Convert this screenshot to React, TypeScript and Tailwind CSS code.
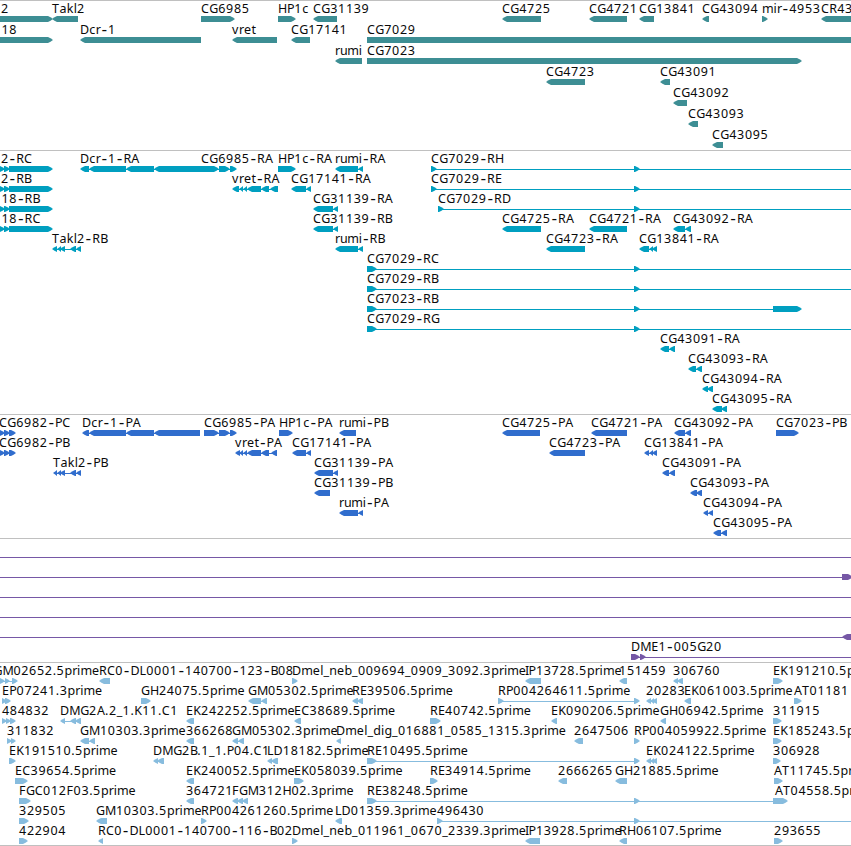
type Part = [start: number, end: number];

interface Feature {
  label?: string;
  strand: '+' | '-';
  parts: Part[];
  /** Left edge of the label, when the feature starts outside the view. */
  labelX?: number;
  /** Right end of the connecting line, when it runs past the last part. */
  lineTo?: number;
  lineFrom?: number;
}

interface Track {
  id: string;
  color: string;
  height: string;
  rowHeight: string;
  rows: Feature[][];
}

const VIEW_WIDTH = 851;
const HEAD = 5;

// Glyph advances for labels, in px
const ADVANCE: Record<string, number> = {
  A: 8.1, B: 7.4, C: 8.3, D: 9.2, E: 7.2, F: 6.9, G: 8.9, H: 9, I: 3.6, K: 7.9, L: 6.6,
  M: 11, P: 7.3, R: 7.9, T: 7.4, a: 7.3, b: 7.7, c: 6.6, d: 7.7, e: 7.5, g: 7.7, i: 3.4,
  k: 7, l: 3.3, m: 11.5, n: 7.6, p: 7.8, r: 4.9, t: 4.8, u: 7.4, v: 7, '-': 7.4, '_': 5.8, '.': 3.9,
};

function fwd(label: string, parts: Part[], extra: Partial<Feature> = {}): Feature {
  return { label, strand: '+', parts, ...extra };
}

function rev(label: string, parts: Part[], extra: Partial<Feature> = {}): Feature {
  return { label, strand: '-', parts, ...extra };
}

const MID: Part = [634, 640];
const OPEN = { lineTo: VIEW_WIDTH };
const LINE: Feature = { strand: '+', parts: [], lineFrom: 0, lineTo: VIEW_WIDTH };
const EDGE_RNA: Part[] = [[-1, 5], [4, 10], [9, 53]];
const EDGE_CDS: Part[] = [[-1, 5], [4, 10], [9, 16]];

const genes: Feature[][] = [
  [
    fwd('2', [[-9, 53]], { labelX: 1 }),
    rev('Takl2', [[52, 78]]),
    fwd('CG6985', [[201, 235]]),
    fwd('HP1c', [[278, 296]]),
    rev('CG31139', [[313, 337]]),
    rev('CG4725', [[502, 541]]),
    rev('CG4721', [[589, 627]]),
    rev('CG13841', [[639, 654]]),
    rev('CG43094', [[702, 709]]),
    fwd('mir-4953', [[762, 768]]),
    rev('CR43', [[821, 870]]),
  ],
  [
    fwd('18', [[-9, 53]], { labelX: 1.5 }),
    rev('Dcr-1', [[80, 201]]),
    rev('vret', [[232, 277]]),
    rev('CG17141', [[291, 310]]),
    fwd('CG7029', [[367, 870]]),
  ],
  [rev('rumi', [[335, 362]]), fwd('CG7023', [[367, 802]])],
  [rev('CG4723', [[546, 585]]), rev('CG43091', [[660, 670]])],
  [rev('CG43092', [[673, 687]])],
  [rev('CG43093', [[688, 698]])],
  [rev('CG43095', [[712, 723]])],
];

const transcripts: Feature[][] = [
  [
    fwd('2-RC', EDGE_RNA, { labelX: 1 }),
    rev('Dcr-1-RA', [[80, 89], [89, 126], [126, 154], [154, 201]]),
    fwd('CG6985-RA', [[201, 219], [219, 230], [230, 237]]),
    fwd('HP1c-RA', [[278, 296]]),
    rev('rumi-RA', [[335, 358], [358, 363]]),
    fwd('CG7029-RH', [[431, 437], MID], OPEN),
  ],
  [
    fwd('2-RB', EDGE_RNA, { labelX: 1 }),
    rev('vret-RA', [[232, 239], [239, 243], [243, 247], [247, 261], [261, 269], [270, 278]]),
    rev('CG17141-RA', [[291, 306], [306, 311]]),
    fwd('CG7029-RE', [[431, 437], MID], OPEN),
  ],
  [
    fwd('18-RB', EDGE_RNA, { labelX: 1.5 }),
    rev('CG31139-RA', [[313, 333], [333, 338]]),
    fwd('CG7029-RD', [[438, 444], MID], OPEN),
  ],
  [
    fwd('18-RC', EDGE_RNA, { labelX: 1.5 }),
    rev('CG31139-RB', [[313, 333], [333, 338]]),
    rev('CG4725-RA', [[502, 541]]),
    rev('CG4721-RA', [[589, 627]]),
    rev('CG43092-RA', [[673, 685], [685, 691]]),
  ],
  [
    rev('Takl2-RB', [[52, 57], [57, 61], [60, 65], [70, 76], [76, 81]]),
    rev('rumi-RB', [[335, 358], [358, 363]]),
    rev('CG4723-RA', [[546, 585]]),
    rev('CG13841-RA', [[639, 649], [649, 653], [652, 657]]),
  ],
  [fwd('CG7029-RC', [[367, 377], MID], OPEN)],
  [fwd('CG7029-RB', [[367, 377], MID], OPEN)],
  [fwd('CG7023-RB', [[367, 377], MID, [773, 802]])],
  [fwd('CG7029-RG', [[367, 377], MID], OPEN)],
  [rev('CG43091-RA', [[660, 669], [669, 675]])],
  [rev('CG43093-RA', [[688, 696], [696, 702]])],
  [rev('CG43094-RA', [[702, 708], [707, 713]])],
  [rev('CG43095-RA', [[712, 722], [721, 727]])],
];

const proteins: Feature[][] = [
  [
    fwd('CG6982-PC', EDGE_CDS, { labelX: -1 }),
    rev('Dcr-1-PA', [[82, 89], [89, 126], [126, 154], [154, 200]]),
    fwd('CG6985-PA', [[204, 219], [219, 230], [230, 237]]),
    fwd('HP1c-PA', [[279, 293]]),
    rev('rumi-PB', [[339, 356]]),
    rev('CG4725-PA', [[502, 540]]),
    rev('CG4721-PA', [[591, 627]]),
    rev('CG43092-PA', [[674, 685], [685, 691]]),
    fwd('CG7023-PB', [[776, 799]]),
  ],
  [
    fwd('CG6982-PB', EDGE_CDS, { labelX: -1 }),
    rev('vret-PA', [[235, 240], [239, 243], [243, 247], [247, 261], [261, 269], [271, 277]]),
    rev('CG17141-PA', [[292, 306], [306, 311]]),
    rev('CG4723-PA', [[549, 585]]),
    rev('CG13841-PA', [[644, 649], [649, 653], [652, 657]]),
  ],
  [
    rev('Takl2-PB', [[53, 57], [57, 61], [60, 65], [70, 76], [76, 81]]),
    rev('CG31139-PA', [[314, 333], [333, 338]]),
    rev('CG43091-PA', [[662, 669], [669, 675]]),
  ],
  [rev('CG31139-PB', [[314, 330]]), rev('CG43093-PA', [[690, 697], [696, 702]])],
  [rev('rumi-PA', [[339, 358], [358, 363]]), rev('CG43094-PA', [[703, 708], [708, 713]])],
  [rev('CG43095-PA', [[713, 721], [721, 727]])],
];

const bacEnds: Feature[][] = [
  [LINE],
  [{ strand: '+', parts: [[842, 853]], lineFrom: 0 }],
  [LINE],
  [LINE],
  [{ strand: '-', parts: [[842, 858]], lineFrom: 0 }],
  [fwd('DME1-005G20', [[631, 640], [640, 646]], OPEN)],
];

const ests: Feature[][] = [
  [
    fwd('GM02652.5prime', [[-1, 5], [5, 10], [12, 18]], { labelX: -6.5 }),
    rev('RC0-DL0001-140700-123-B08', [[99, 110]]),
    fwd('Dmel_neb_009694_0909_3092.3prime', [[292, 298]]),
    rev('IP13728.5prime', [[525, 541]]),
    rev('151459', [[619, 627]]),
    rev('306760', [[673, 678], [677, 683]]),
    fwd('EK191210.5prime', [[773, 783]]),
  ],
  [
    fwd('EP07241.3prime', [[2, 7], [5, 11]]),
    fwd('GH24075.5prime', [[141, 151]]),
    rev('GM05302.5prime', [[248, 261], [261, 267]]),
    rev('RE39506.5prime', [[352, 358], [357, 363]]),
    fwd('RP004264611.5prime', [[498, 504], MID]),
    rev('20283', [[646, 651], [650, 654], [652, 657]]),
    rev('EK061003.5prime', [[684, 691]]),
    fwd('AT01181', [[794, 802]]),
  ],
  [
    fwd('484832', [[2, 7], [6, 11], [10, 16]]),
    rev('DMG2A.2_1.K11.C1', [[60, 65], [70, 76], [75, 81]]),
    rev('EK242252.5prime', [[186, 194]]),
    rev('EC38689.5prime', [[294, 301]]),
    fwd('RE40742.5prime', [[430, 441]]),
    rev('EK090206.5prime', [[551, 557]]),
    rev('GH06942.5prime', [[660, 666]]),
    fwd('311915', [[773, 782]]),
  ],
  [
    fwd('311832', [[7, 12], [11, 16]]),
    rev('GM10303.3prime', [[80, 89], [89, 95]]),
    rev('366268', [[186, 194]]),
    rev('GM05302.3prime', [[232, 238], [238, 244]]),
    rev('Dmel_dig_016881_0585_1315.3prime', [[336, 341]]),
    rev('2647506', [[574, 583]]),
    fwd('RP004059922.5prime', [[634, 640]]),
    fwd('EK185243.5prime', [[773, 782]]),
  ],
  [
    fwd('EK191510.5prime', [[9, 16]]),
    rev('DMG2B.1_1.P04.C1', [[153, 158], [157, 164]]),
    rev('LD18182.5prime', [[267, 272], [271, 278]]),
    fwd('RE10495.5prime', [[367, 377], MID]),
    rev('EK024122.5prime', [[646, 651], [650, 654], [652, 657]]),
    fwd('306928', [[773, 781]]),
  ],
  [
    fwd('EC39654.5prime', [[15, 28]]),
    rev('EK240052.5prime', [[186, 194]]),
    fwd('EK058039.5prime', [[294, 304]]),
    fwd('RE34914.5prime', [[430, 438]]),
    rev('2666265', [[558, 567]]),
    rev('GH21885.5prime', [[615, 627]]),
    fwd('AT11745.5prime', [[774, 783]]),
  ],
  [
    fwd('FGC012F03.5prime', [[19, 31]]),
    rev('364721', [[186, 194]]),
    rev('FGM312H02.3prime', [[232, 238], [237, 243], [242, 248]]),
    fwd('RE38248.5prime', [[367, 377], MID, [773, 783]]),
    fwd('AT04558.5prime', [[775, 788]]),
  ],
  [
    fwd('329505', [[19, 29]]),
    rev('GM10303.5prime', [[96, 107]]),
    fwd('RP004261260.5prime', [[201, 207]]),
    rev('LD01359.3prime', [[335, 342]]),
    fwd('496430', [[437, 443], MID], OPEN),
  ],
  [
    fwd('422904', [[19, 28]]),
    rev('RC0-DL0001-140700-116-B02', [[98, 103]]),
    fwd('Dmel_neb_011961_0670_2339.3prime', [[292, 298]]),
    rev('IP13928.5prime', [[525, 540]]),
    rev('RH06107.5prime', [[619, 627]]),
    fwd('293655', [[774, 783]]),
  ],
];

const tracks: Track[] = [
  { id: 'genes', color: 'text-[#3d8e94]', height: 'h-[150px]', rowHeight: 'h-[21px]', rows: genes },
  { id: 'transcripts', color: 'text-[#009fc0]', height: 'h-[264px]', rowHeight: 'h-5', rows: transcripts },
  { id: 'proteins', color: 'text-[#306dcd]', height: 'h-[124px]', rowHeight: 'h-5', rows: proteins },
  { id: 'bac-ends', color: 'text-[#7658a6]', height: 'h-[124px]', rowHeight: 'h-5', rows: bacEnds },
  { id: 'ests', color: 'text-[#87bcde]', height: 'h-[183px]', rowHeight: 'h-5', rows: ests },
];

// Hyphens use the monospace face, whose dash is as wide as a digit
function Label({ text, start }: { text: string; start: number }) {
  let x = start;
  const runs = text.split(/(-)/).map((run) => {
    const xs = [...run].map((ch) => {
      const at = ch === '-' ? x - 1.2 : x;
      x += ADVANCE[ch] ?? 7.85;
      return at.toFixed(1);
    });
    return { run, xs: xs.join(' ') };
  });

  return (
    <text className="fill-[#0a0a0a]">
      {runs.map(({ run, xs }, i) => (
        <tspan
          key={i}
          x={xs}
          y={run === '-' ? 13 : 12}
          className={run === '-' ? "font-['DejaVu_Sans_Mono',monospace] text-[16px]" : undefined}
        >
          {run}
        </tspan>
      ))}
    </text>
  );
}

function arrowPoints([start, end]: Part, strand: Feature['strand']) {
  const head = Math.min(HEAD, end - start);
  const [tail, tip, dir] = strand === '+' ? [start, end, -1] : [end, start, 1];
  const neck = tip + dir * head;
  const cheek = tip + dir * 2.5;
  return `${tail},15 ${neck},15 ${cheek},16.3 ${tip},18 ${cheek},19.7 ${neck},21 ${tail},21`;
}

function FeatureGlyph({ feature }: { feature: Feature }) {
  const { label, strand, parts, labelX, lineFrom, lineTo } = feature;
  const from = lineFrom ?? parts[0][0] + 3;
  const to = lineTo ?? parts[parts.length - 1][1] - 3;
  const hasLine = parts.length !== 1 || lineFrom !== undefined;

  return (
    <g>
      {hasLine && <rect x={from} y={18} width={to - from} height={1} />}
      {parts.map((part) => (
        <polygon key={part[0]} points={arrowPoints(part, strand)} />
      ))}
      {label && <Label text={label} start={labelX ?? parts[0][0]} />}
    </g>
  );
}

function TrackPanel({ track }: { track: Track }) {
  return (
    <section className={`flex flex-col border-t border-[#c0c0c0] ${track.height} ${track.color}`}>
      {track.rows.map((row, i) => (
        <svg key={i} className={`block w-full shrink-0 overflow-visible fill-current ${track.rowHeight}`}>
          {row.map((feature, j) => (
            <FeatureGlyph key={j} feature={feature} />
          ))}
        </svg>
      ))}
    </section>
  );
}

export default function App() {
  return (
    <main className="w-[851px] h-[846px] overflow-hidden bg-white border-b border-[#c0c0c0] font-['Noto_Sans',sans-serif] text-[12.5px]">
      {tracks.map((track) => (
        <TrackPanel key={track.id} track={track} />
      ))}
    </main>
  );
}
